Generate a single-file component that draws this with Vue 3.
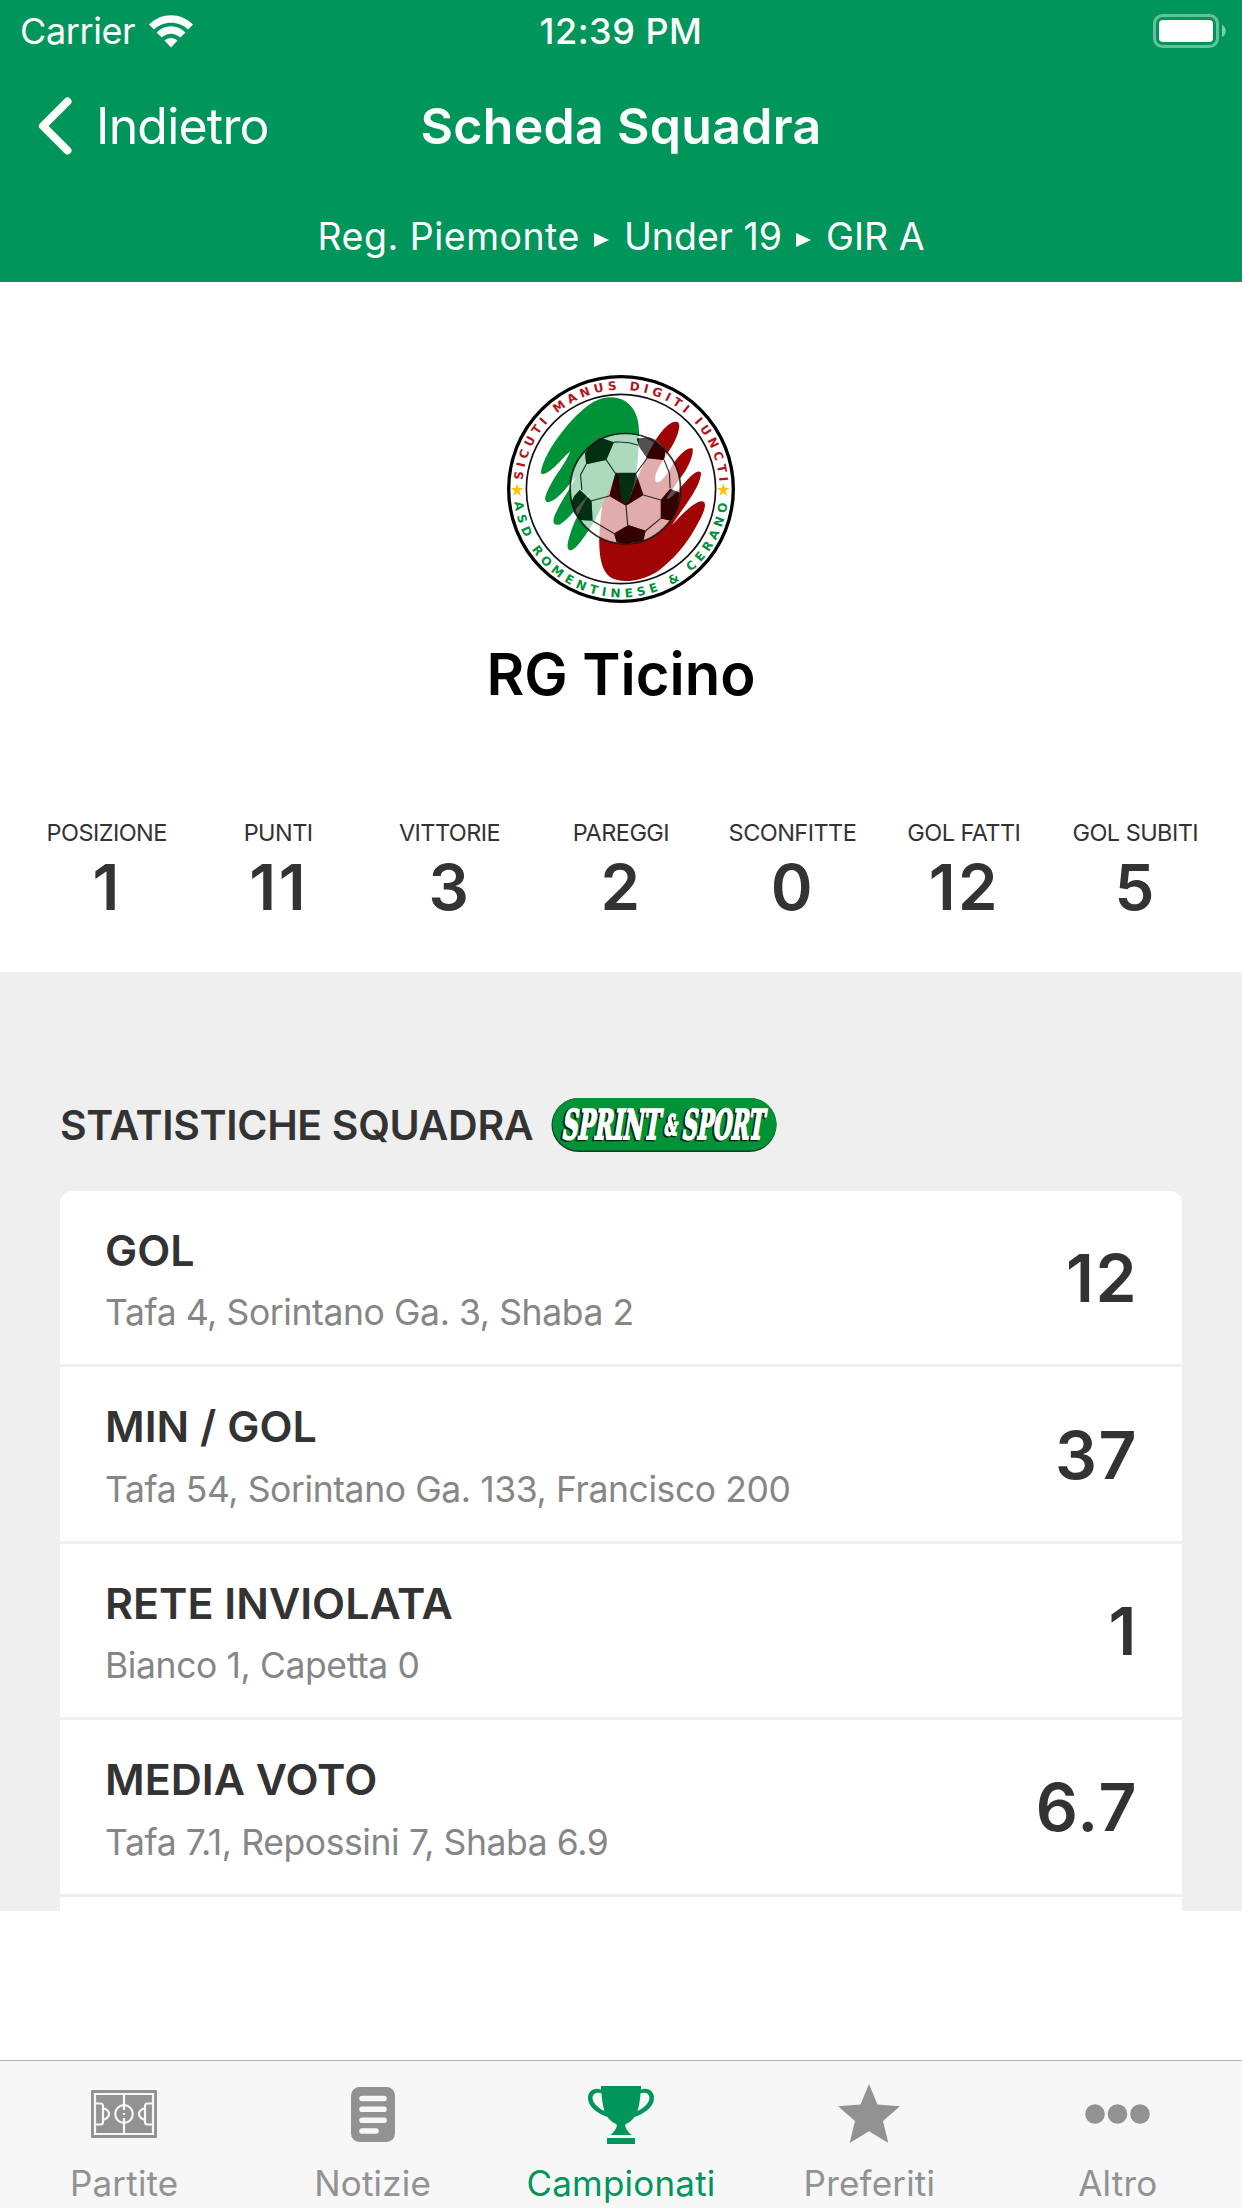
<template>
  <div class="app">
    <header class="header">
      <div class="status-bar">
        <div class="carrier">
          <span class="carrier-name">Carrier</span>
          <svg class="wifi" viewBox="0 0 44 33">
            <path d="M0 9.5C12-3 32-3 44 9.5L39 14.6C30 5.6 14 5.6 5 14.6Z" />
            <path d="M7.6 17.5C15.5 9.3 28.5 9.3 36.4 17.5L31.3 22.6C26 17.5 18 17.5 12.7 22.6Z" />
            <path d="M15.5 25.6C19 22.2 25 22.2 28.5 25.6L22 32.6Z" />
          </svg>
        </div>
        <div class="time">12:39 PM</div>
        <svg class="battery" viewBox="0 0 74 34">
          <rect x="1.5" y="1.5" width="63" height="31" rx="8" fill="none" stroke="#fff" stroke-opacity="0.4" stroke-width="3" />
          <rect x="6" y="6" width="54" height="22" rx="4" />
          <path d="M69 11C74 13 74 21 69 23Z" fill-opacity="0.5" />
        </svg>
      </div>
      <nav class="nav-bar">
        <a class="back">
          <svg class="chevron" viewBox="0 0 34 58"><path d="M29.5 4.5L5 29L29.5 53.5" /></svg>
          <span class="back-text">Indietro</span>
        </a>
        <h1>Scheda Squadra</h1>
        <span></span>
      </nav>
      <div class="breadcrumb">
        <span class="crumb">Reg. Piemonte</span>
        <i class="arrow"></i>
        <span class="crumb">Under 19</span>
        <i class="arrow"></i>
        <span class="crumb">GIR A</span>
      </div>
    </header>

    <section class="team">
      <svg class="crest" viewBox="52 46 682 682">
        <defs>
          <path id="arc-top" d="M99 361A295 295 0 0 1 687 361" />
          <path id="arc-bottom" d="M74 426A321 321 0 0 0 712 426" />
        </defs>
        <circle cx="393" cy="387" r="336" fill="#fff" stroke="#000" stroke-width="10" />
        <circle cx="393" cy="387" r="283" fill="none" stroke="#111" stroke-width="5" />
        <text class="motto red"><textPath href="#arc-top" textLength="882">SICUTI MANUS DIGITI IUNCTI</textPath></text>
        <text class="motto green"><textPath href="#arc-bottom" textLength="932">ASD ROMENTINESE &amp; CERANO</textPath></text>
        <path d="M82 370L86.500 384H101L89 393L94 408L82 399L70 408L75 393L63 384H77.500Z" fill="#fdbf10" />
        <path d="M699 370L703.500 384H718L706 393L711 408L699 399L687 408L692 393L680 384H694.500Z" fill="#fdbf10" />
        <!-- mani -->
        <path fill="#a00404" d="M376 332C390 330 388 370 395 410C400 440 412 435 425 400C440 360 470 280 500 235C520 205 545 180 563 187C575 195 560 235 545 260C520 300 490 340 496 362C505 380 530 345 550 310C570 280 595 260 607 266C612 285 590 330 570 355C550 385 525 415 532 418C550 410 575 375 600 350C620 330 635 330 632 345C625 390 580 440 545 495C565 475 590 445 620 428C645 415 650 430 638 460C600 540 560 590 500 635C450 665 390 670 360 650C320 620 325 530 335 450C340 400 360 340 376 332Z" />
        <path fill="#009236" d="M153 340C160 270 270 140 320 122C380 95 447 125 447 215C447 320 430 415 405 432C392 425 390 380 385 335C350 400 330 460 300 505C280 535 260 565 243 571C225 570 235 540 245 510C255 480 280 430 300 400C270 430 235 480 210 493C185 500 188 475 200 455C215 420 240 390 258 350C235 375 205 420 175 427C160 425 165 405 185 370C200 340 225 315 241 275C220 290 190 335 160 343Z" />
        <!-- pallone -->
        <path :d="ballBody" fill="#fff" fill-opacity="0.67" fill-rule="evenodd" />
        <path :d="ballPatches" fill="#000" fill-opacity="0.68" />
        <path class="seams" d="M372 247Q410 244 445 256M349 300L376 340H438L471 295M289 313L272 345L276 390M358 408L305 422M408 437L413 495M460 405L512 420M512 475L467 512M308 482L372 520M522 300L538 340L540 385" />
        <circle cx="406" cy="386" r="165" fill="none" stroke="#111" stroke-opacity="0.85" stroke-width="5" />
      </svg>
      <h2 class="team-name">RG Ticino</h2>
      <div class="summary">
        <div v-for="item in summary" :key="item.label" class="summary-item">
          <span class="summary-label">{{ item.label }}</span>
          <span class="summary-value">{{ item.value }}</span>
        </div>
      </div>
    </section>

    <section class="stats">
      <div class="stats-header">
        <h3>STATISTICHE SQUADRA</h3>
        <svg class="sponsor" viewBox="0 0 226 55">
          <rect x="0.5" y="1" width="225" height="54" rx="27" fill="#1d3a26" />
          <rect x="1.5" y="1" width="224" height="52.5" rx="26.2" fill="#009236" />
          <g transform="translate(10 42) skewX(-9)">
            <g class="sponsor-shadow" transform="translate(-1.5 1)">
              <text textLength="98" lengthAdjust="spacingAndGlyphs">SPRINT</text>
              <text class="amp" x="102" y="-4" textLength="13" lengthAdjust="spacingAndGlyphs">&amp;</text>
              <text x="120" textLength="82" lengthAdjust="spacingAndGlyphs">SPORT</text>
            </g>
            <g class="sponsor-text">
              <text textLength="98" lengthAdjust="spacingAndGlyphs">SPRINT</text>
              <text class="amp" x="102" y="-4" textLength="13" lengthAdjust="spacingAndGlyphs">&amp;</text>
              <text x="120" textLength="82" lengthAdjust="spacingAndGlyphs">SPORT</text>
            </g>
          </g>
        </svg>
      </div>
      <div class="card">
        <div v-for="row in rows" :key="row.title" class="row">
          <div class="row-text">
            <span class="row-title">{{ row.title }}</span>
            <span class="row-players">{{ row.players }}</span>
          </div>
          <span class="row-value">{{ row.value }}</span>
        </div>
      </div>
    </section>

    <div class="spacer"></div>

    <footer class="tab-bar">
      <a v-for="tab in tabs" :key="tab.name" class="tab" :class="{ active: tab.active }">
        <span class="tab-icon">
          <svg v-if="tab.icon === 'pitch'" width="66" height="48" viewBox="0 0 66 48">
            <rect width="66" height="48" rx="1" fill="currentColor" />
            <g fill="none" stroke="#f7f7f7" stroke-width="2.2">
              <path d="M4 4H62V44H4ZM33 4V20M33 28V44M4 13.5H9.500Q12 13.500 12 16V32Q12 34.500 9.500 34.500H4M62 13.500H56.500Q54 13.500 54 16V32Q54 34.500 56.500 34.500H62M12 18Q18 20 18 24T12 30M54 18Q48 20 48 24T54 30" />
              <circle cx="33" cy="24" r="8.8" />
            </g>
            <rect x="32" y="23" width="2" height="2" fill="#f7f7f7" />
          </svg>
          <svg v-else-if="tab.icon === 'news'" width="44" height="55" viewBox="0 0 44 55">
            <rect width="44" height="55" rx="8.5" fill="currentColor" />
            <path d="M11 11.5H33M11 22.3H33M11 33.2H33M11 44H25" stroke="#f7f7f7" stroke-width="5.6" stroke-linecap="round" />
          </svg>
          <svg v-else-if="tab.icon === 'trophy'" width="68" height="59" viewBox="0 0 68 59">
            <path fill="currentColor" fill-rule="evenodd" d="M14 1H54V4.500C61 2 67.300 6 67 13.500C66.500 23 56 29 47.500 32C44 37 40 38 38 40C38.500 44 41.500 47.500 44.700 50H23.300C26.500 47.500 29.500 44 30 40C28 38 24 37 20.500 32C12 29 1.500 23 1 13.500C.7 6 7 2 14 4.500ZM14.500 8.200C9 6.500 5.500 9 5.500 13C6 19 12 23.500 17.500 26C15.500 20 15 14 14.500 8.200ZM53.500 8.200C53 14 52.500 20 50.500 26C56 23.500 62 19 62.500 13C62.500 9 59 6.500 53.500 8.200Z" />
            <rect x="20" y="53" width="28" height="6" fill="currentColor" />
          </svg>
          <svg v-else-if="tab.icon === 'star'" width="62" height="60" viewBox="0 0 62 60">
            <path fill="currentColor" d="M31 0L39.500 20.500L62 22.300L45 37L50.300 59L31 47.300L11.700 59L17 37L0 22.300L22.500 20.500Z" />
          </svg>
          <svg v-else width="66" height="20" viewBox="0 0 66 20">
            <circle cx="10" cy="10" r="9.8" fill="currentColor" />
            <circle cx="32.5" cy="10" r="9.8" fill="currentColor" />
            <circle cx="55" cy="10" r="9.8" fill="currentColor" />
          </svg>
        </span>
        <span class="tab-name">{{ tab.name }}</span>
      </a>
    </footer>
  </div>
</template>

<script setup>
// Riepilogo della squadra
const summary = [
  { label: 'POSIZIONE', value: 1 },
  { label: 'PUNTI', value: 11 },
  { label: 'VITTORIE', value: 3 },
  { label: 'PAREGGI', value: 2 },
  { label: 'SCONFITTE', value: 0 },
  { label: 'GOL FATTI', value: 12 },
  { label: 'GOL SUBITI', value: 5 }
];

// Statistiche
const rows = [
  { title: 'GOL', players: 'Tafa 4, Sorintano Ga. 3, Shaba 2', value: '12' },
  { title: 'MIN / GOL', players: 'Tafa 54, Sorintano Ga. 133, Francisco 200', value: '37' },
  { title: 'RETE INVIOLATA', players: 'Bianco 1, Capetta 0', value: '1' },
  { title: 'MEDIA VOTO', players: 'Tafa 7.1, Repossini 7, Shaba 6.9', value: '6.7' }
];

const tabs = [
  { name: 'Partite', icon: 'pitch' },
  { name: 'Notizie', icon: 'news' },
  { name: 'Campionati', icon: 'trophy', active: true },
  { name: 'Preferiti', icon: 'star' },
  { name: 'Altro', icon: 'more' }
];

// Pannelli neri del pallone
const ballPatches = [
  'M285 280L305 252L327 232L372 247L349 300L289 313Z',
  'M440 236L478 232L502 242L526 272L522 300L471 295L448 262Z',
  'M376 340H438L460 405L408 437L358 408Z',
  'M243 430L253 408L270 390L305 422L308 482L268 480L250 455Z',
  'M512 420L540 386L569 398L562 440L544 482L512 475Z',
  'M372 520L415 495L467 512L460 542L410 551L380 546Z'
].join('');
const ballBody = 'M241 386A165 165 0 1 0 571 386A165 165 0 1 0 241 386Z' + ballPatches;
</script>

<style>
body {
  margin: 0;
  background-color: #fff;
}
</style>

<style scoped>
.app {
  display: flex;
  flex-direction: column;
  width: 1242px;
  height: 2208px;
  overflow: hidden;
  font-family: Inter, "Liberation Sans", sans-serif;
  color: #333;
}

h1,
h2,
h3 {
  margin: 0;
}

.header {
  height: 282px;
  background-color: #00965b;
  color: #fff;
}

.status-bar {
  display: grid;
  grid-template-columns: 1fr auto 1fr;
  align-items: center;
  height: 62px;
  padding: 0 15px;
  font-size: 36px;
}

.carrier {
  display: flex;
  align-items: center;
  gap: 14px;
  padding-left: 5px;
}

.carrier-name {
  letter-spacing: -0.4px;
}

.wifi {
  width: 44px;
  height: 33px;
  fill: #fff;
}

.time {
  font-weight: 500;
  letter-spacing: 0.5px;
}

.battery {
  justify-self: end;
  width: 74px;
  height: 34px;
  fill: #fff;
}

.nav-bar {
  display: grid;
  grid-template-columns: 1fr auto 1fr;
  align-items: center;
  height: 128px;
  padding: 0 38px;
  font-size: 50px;
}

.nav-bar h1 {
  font-size: 50px;
  font-weight: 600;
  letter-spacing: 0.3px;
}

.back {
  display: flex;
  align-items: center;
  gap: 24px;
  letter-spacing: -0.8px;
}

.chevron {
  width: 34px;
  height: 58px;
  fill: none;
  stroke: #fff;
  stroke-width: 8;
  stroke-linecap: round;
  stroke-linejoin: round;
}

.breadcrumb {
  display: flex;
  align-items: center;
  justify-content: center;
  gap: 14.5px;
  height: 92px;
  font-size: 37.5px;
}

.crumb:first-child {
  letter-spacing: 0.5px;
}

.arrow {
  border-left: 15px solid #fff;
  border-top: 7.5px solid transparent;
  border-bottom: 7.5px solid transparent;
  margin-top: 7px;
}

.team {
  display: flex;
  flex-direction: column;
  align-items: center;
  box-sizing: border-box;
  height: 690px;
  padding-top: 93px;
}

.crest {
  width: 228px;
  height: 228px;
}

.motto {
  font: bold 36px "DejaVu Sans", sans-serif;
}

.motto.red {
  fill: #b3141c;
}

.motto.green {
  fill: #009236;
}

.seams {
  fill: none;
  stroke: #111;
  stroke-opacity: 0.85;
  stroke-width: 3.5;
}

.team-name {
  margin-top: 31px;
  font-size: 58px;
  font-weight: 600;
  line-height: 80px;
  color: #000;
}

.summary {
  display: grid;
  grid-template-columns: repeat(7, 1fr);
  width: 1200px;
  margin-top: 103px;
}

.summary-item {
  display: flex;
  flex-direction: column;
  align-items: center;
  gap: 9px;
}

.summary-label {
  font-size: 23.5px;
  line-height: 31px;
  letter-spacing: -0.55px;
  white-space: nowrap;
}

.summary-value {
  font-size: 63.5px;
  font-weight: 600;
  line-height: 60px;
  letter-spacing: 2.5px;
  text-indent: 1px;
}

.stats {
  box-sizing: border-box;
  height: 939px;
  padding: 125px 60px 0;
  background-color: #efefef;
  overflow: hidden;
}

.stats-header {
  display: flex;
  align-items: center;
  height: 56px;
}

.stats-header h3 {
  width: 491px;
  font-size: 41px;
  font-weight: 600;
  letter-spacing: -0.33px;
  white-space: nowrap;
}

.sponsor {
  width: 226px;
  height: 55px;
  margin-bottom: 2px;
  overflow: visible;
}

.sponsor text {
  font-family: "DejaVu Serif Condensed", "DejaVu Serif", serif;
  font-size: 41px;
  font-weight: bold;
}

.sponsor .amp {
  font-size: 28px;
}

.sponsor-shadow {
  fill: #06210f;
  stroke: #06210f;
  stroke-width: 2.4;
}

.sponsor-text {
  fill: #fff;
  stroke: #fff;
  stroke-width: 1.8;
}

.card {
  height: 900px;
  margin-top: 38px;
  border-radius: 12px;
  background-color: #fff;
}

.row {
  display: flex;
  justify-content: space-between;
  align-items: center;
  box-sizing: border-box;
  height: 176.4px;
  padding: 1px 44px 0 45px;
  border-bottom: 3px solid #efefef;
}

.row-text {
  display: flex;
  flex-direction: column;
  align-items: flex-start;
  gap: 15.5px;
  padding-top: 3px;
}

.row-title {
  font-size: 43px;
  font-weight: 600;
  line-height: 52px;
}

.row-players {
  font-size: 35.5px;
  line-height: 44px;
  letter-spacing: -0.4px;
  color: #868686;
}

.row-value {
  font-size: 66px;
  font-weight: 600;
  letter-spacing: 1.5px;
}

.spacer {
  flex: 1;
}

.tab-bar {
  display: grid;
  grid-template-columns: repeat(5, 1fr);
  height: 147px;
  border-top: 1px solid #b2b2b2;
  background-color: #f7f7f7;
}

.tab {
  display: flex;
  flex-direction: column;
  align-items: center;
  color: #929292;
}

.tab.active {
  color: #00965b;
}

.tab-icon {
  display: flex;
  align-items: center;
  height: 106px;
}

.tab-name {
  font-size: 35px;
  line-height: 33px;
  letter-spacing: 0.2px;
}
</style>
